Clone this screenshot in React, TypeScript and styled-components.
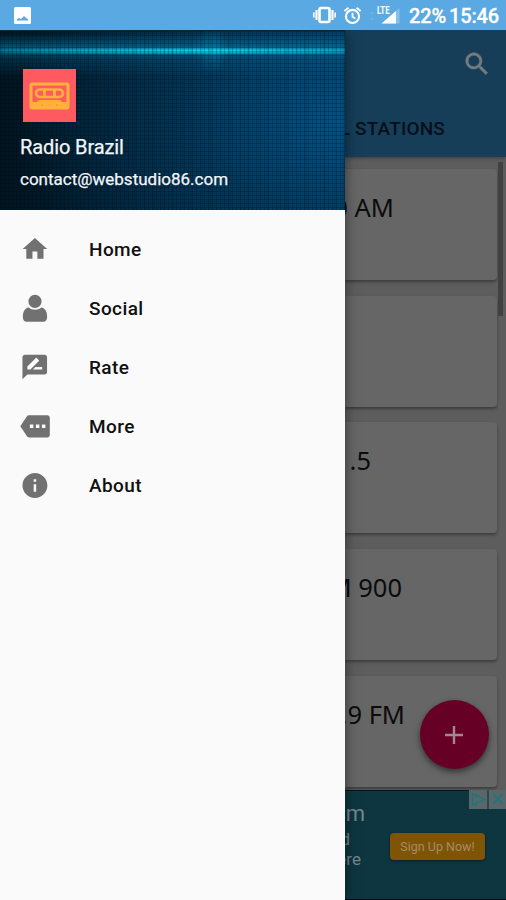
import React from "react";
import styled, { createGlobalStyle } from "styled-components";

const Global = createGlobalStyle`
  * { box-sizing: border-box; }
  body { margin: 0; background: #fafafa; font-family: Roboto, sans-serif; }
`;

const Screen = styled.div`
  width: 506px;
  height: 900px;
  overflow: hidden;
  display: flex;
  flex-direction: column;
`;

const StatusBar = styled.header`
  height: 30px;
  flex: none;
  background: #5aa9e3;
  display: flex;
  align-items: center;
  padding: 0 7px 0 14px;
  color: #fff;
`;

const StatusIcons = styled.div`
  margin-left: auto;
  display: flex;
  align-items: center;
  gap: 7px;
  margin-right: 7px;
`;

const StatusText = styled.span<{ $w: number }>`
  width: ${(p) => p.$w}px;
  font-size: 20px;
  line-height: 30px;
  font-weight: 500;
  letter-spacing: -0.15px;
  -webkit-text-stroke: 0.3px #fff;
  white-space: nowrap;
  padding-top: 2px;
`;

const Body = styled.div`
  flex: 1;
  min-height: 0;
  display: flex;
`;

const Drawer = styled.nav`
  width: 345px;
  flex: none;
  background: #fafafa;
  z-index: 1;
  box-shadow: 0 0 12px rgba(0, 0, 0, 0.5);
  clip-path: inset(0 -20px 0 0);
`;

const Banner = styled.div`
  height: 180px;
  padding: 38px 20px 0;
  border-top: 1px solid #06293a;
  color: #f3f6f8;
  background:
    repeating-linear-gradient(90deg, rgba(0, 8, 24, 0.24) 0 1px, transparent 1px 4px),
    repeating-linear-gradient(180deg, rgba(0, 8, 24, 0.24) 0 1px, transparent 1px 4px),
    repeating-linear-gradient(90deg, rgba(0, 20, 40, 0.1) 0 3px, transparent 3px 11px, rgba(0, 20, 40, 0.08) 11px 13px, transparent 13px 19px),
    radial-gradient(ellipse 260px 4px at 205px 20px, rgba(20, 230, 255, 0.95), transparent),
    radial-gradient(ellipse 16px 24px at 212px 19px, rgba(0, 190, 230, 0.25), transparent),
    linear-gradient(180deg, transparent 2px, rgba(0, 135, 180, 0.65) 19px, rgba(0, 110, 160, 0.3) 27px, transparent 46px),
    radial-gradient(ellipse 330px 220px at 345px 90px, #025386, rgba(3, 62, 100, 0.65) 50%, transparent),
    linear-gradient(90deg, #011520, #02304d);
`;

const Logo = styled.svg`
  display: block;
  width: 53px;
  height: 53px;
  margin-left: 3px;
`;

const AppName = styled.div`
  margin-top: 12px;
  font-size: 20px;
  line-height: 26px;
  letter-spacing: -0.1px;
  -webkit-text-stroke: 0.25px #f3f6f8;
`;

const Email = styled.div`
  margin-top: 8px;
  font-size: 17px;
  line-height: 22px;
  -webkit-text-stroke: 0.25px #f3f6f8;
`;

const Menu = styled.ul`
  list-style: none;
  margin: 0;
  padding: 10px 0 0;
`;

const MenuItem = styled.li`
  height: 59px;
  display: flex;
  align-items: center;
  padding-left: 17px;
  font-size: 19px;
  font-weight: 500;
  letter-spacing: 0.4px;
  color: #101010;
`;

const MenuIcon = styled.svg`
  width: 36px;
  height: 36px;
  margin-right: 36px;
  fill: #717171;
`;

const Page = styled.main`
  flex: 1;
  min-width: 0;
  display: flex;
  flex-direction: column;
  overflow: hidden;
  background: #5d5d5d;
`;

const AppBar = styled.div`
  height: 127px;
  flex: none;
  display: flex;
  flex-direction: column;
  align-items: flex-end;
  background: #163e59;
  box-shadow: 0 1px 4px rgba(0, 0, 0, 0.35);
`;

const SearchIcon = styled.svg`
  width: 30px;
  height: 30px;
  margin: 19px 14px 0 0;
  fill: #777b7e;
  stroke: #777b7e;
  stroke-width: 0.4;
`;

const Tab = styled.div`
  margin: 37px 61px 0 0;
  font-size: 19px;
  line-height: 26px;
  font-weight: 500;
  letter-spacing: 0.15px;
  color: #07101a;
  white-space: nowrap;
`;

const ListArea = styled.div`
  flex: 1;
  min-height: 0;
  position: relative;
  overflow: hidden;
  padding: 12px 9px 0 0;
`;

const Stations = styled.div`
  display: flex;
  flex-direction: column;
  gap: 15.7px;
`;

const Card = styled.div`
  height: 111px;
  flex: none;
  background: #666;
  border-radius: 0 4px 4px 0;
  box-shadow: 0 2px 3px rgba(0, 0, 0, 0.35);
  display: flex;
  justify-content: flex-end;
`;

const Station = styled.div<{ $end: number }>`
  margin-right: ${(p) => p.$end}px;
  padding-top: 20px;
  font-family: "Noto Sans", sans-serif;
  font-size: 25.5px;
  line-height: 36px;
  color: #0c0c0c;
  white-space: nowrap;
`;

const ScrollThumb = styled.div`
  position: absolute;
  top: 5px;
  right: 3px;
  width: 5px;
  height: 154px;
  background: #414141;
`;

const AddButton = styled.button`
  position: absolute;
  right: 17.5px;
  bottom: 21px;
  width: 69px;
  height: 69px;
  border: 0;
  padding: 0;
  border-radius: 50%;
  background: #660024;
  box-shadow: 0 3px 6px rgba(0, 0, 0, 0.5);
  display: grid;
  place-items: center;
`;

const Ad = styled.aside`
  position: relative;
  height: 110px;
  flex: none;
  display: flex;
  align-items: center;
  justify-content: space-between;
  padding-right: 21px;
  background: #0e3641;
  border-top: 1px solid #03181f;
  border-bottom: 1px solid #02090c;
  color: #75868b;
`;

const AdCopy = styled.div`
  align-self: flex-start;
  width: 20px;
  display: flex;
  flex-direction: column;
  align-items: flex-end;
  padding-top: 10px;
`;

const AdLine = styled.span<{ $size: number; $h: number; $end?: number }>`
  font-size: ${(p) => p.$size}px;
  line-height: ${(p) => p.$h}px;
  margin-right: ${(p) => p.$end ?? 0}px;
`;

const AdButton = styled.div`
  width: 95px;
  height: 27px;
  margin-top: 2px;
  border-radius: 4px;
  background: #805405;
  box-shadow: 0 1px 3px rgba(0, 0, 0, 0.5);
  font-size: 12.5px;
  line-height: 27px;
  text-align: center;
  color: #a28c68;
`;

const AdChoices = styled.svg`
  position: absolute;
  top: -1px;
  right: 0;
`;

const menu = [
  { label: "Home", d: "M10 20v-6h4v6h5v-8h3L12 3 2 12h3v8z", scale: "translate(2.1 1.5) scale(.82)" },
  { label: "Social", d: "M12 2.5a4.4 4.4 0 0 1 0 8.8a4.4 4.4 0 0 1 0-8.8zM7.8 11c1.1 1 2.5 1.5 4.2 1.5s3.1-.5 4.2-1.5c2.6.4 3.9 2.9 3.9 6.1 0 2.2-1 3.4-2.6 3.4h-11c-1.6 0-2.6-1.2-2.6-3.4C3.9 13.9 5.2 11.4 7.8 11z" },
  { label: "Rate", d: "M20 2H4c-1.1 0-1.99.9-1.99 2L2 22l4-4h14c1.1 0 2-.9 2-2V4c0-1.1-.9-2-2-2zM6 14v-2.47l6.88-6.88c.2-.2.51-.2.71 0l1.77 1.77c.2.2.2.51 0 .71L8.47 14H6zm12 0h-7.5l2-2H18v2z", scale: "translate(2 1.5) scale(.82)" },
  { label: "More", d: "M22 3H7c-.69 0-1.23.35-1.59.88L0 12l5.41 8.11c.36.53.97.89 1.66.89H22c1.1 0 2-.9 2-2V5c0-1.1-.9-2-2-2zM7.8 10.6h2.8v2.8H7.8zM12.7 10.6h2.8v2.8h-2.8zM17.6 10.6h2.8v2.8h-2.8z", scale: "translate(2.2 1.7) scale(.82)" },
  { label: "About", d: "M12 2C6.48 2 2 6.48 2 12s4.48 10 10 10 10-4.48 10-10S17.52 2 12 2zm1 15h-2v-6h2v6zm0-8h-2V7h2v2z", scale: "translate(2 1.7) scale(.83)" },
];

const stations = [
  { name: "0 AM", end: 103 },
  { name: "", end: 0 },
  { name: ".5", end: 126 },
  { name: "M 900", end: 95 },
  { name: ".9 FM", end: 92 },
];

export default function App() {
  return (
    <>
      <Global />
      <Screen>
        <StatusBar>
          <svg width="17" height="17" viewBox="0 0 17 17">
            <rect width="17" height="17" rx="1.5" fill="#fff" />
            <path d="M3 13.5v-1.5l2-1 2 1 3-3 2 2 2 1v1.5z" fill="#5aa9e3" />
          </svg>
          <StatusIcons>
            <svg width="23" height="18" viewBox="0 0 23 18" fill="none" stroke="#fff">
              <rect x="6.5" y="2" width="10" height="14" rx="1.5" strokeWidth="2.6" />
              <path d="M3.5 4v10M19.5 4v10" strokeWidth="2.2" />
              <path d="M.8 6.5v5M22.2 6.5v5" strokeWidth="1.6" />
            </svg>
            <svg width="19" height="19" viewBox="0 0 20 20" fill="none" stroke="#fff" strokeWidth="2.3">
              <circle cx="10" cy="11" r="6.9" />
              <path d="M1.5 5.3 5.8 1.8M18.500 5.3 14.2 1.8M10 7v4.3l3 1.8" strokeWidth="1.9" />
            </svg>
            <svg width="33" height="22" viewBox="5 0 33 22">
              <circle cx="8" cy="9" r="1" fill="#79baeb" />
              <circle cx="8" cy="15" r="1" fill="#79baeb" />
              <path d="M18 19.500 35.500 4v15.500z" fill="#83c0ed" />
              <path d="M17.500 19.500 32 7v12.500z" fill="#fff" />
              <rect x="12" y="1" width="13.500" height="9.500" fill="#5aa9e3" />
              <text x="13" y="10" fontFamily="Roboto" fontWeight="700" fontSize="11" textLength="12.500" lengthAdjust="spacingAndGlyphs" fill="#fff">LTE</text>
            </svg>
          </StatusIcons>
          <StatusText $w={40}>22%</StatusText>
          <StatusText $w={50}>15:46</StatusText>
        </StatusBar>
        <Body>
          <Drawer>
            <Banner>
              <Logo viewBox="0 0 53 53">
                <rect width="53" height="53" fill="#ff5a5f" />
                <rect x="8" y="15" width="37" height="24" rx="1" fill="none" stroke="#ffb13b" strokeWidth="3" />
                <path d="M8 33h6l2-2h21l2 2h6v7H8z" fill="#ffb13b" />
                <rect x="13" y="20.5" width="27" height="7.5" rx="3.7" fill="none" stroke="#ffb13b" strokeWidth="2.6" />
                <path d="M21.5 20v9M31.5 20v9" stroke="#ffb13b" strokeWidth="3" />
                <path d="M18 36h2M26 36h1M33 36h2" stroke="#ee8c3d" />
              </Logo>
              <AppName>Radio Brazil</AppName>
              <Email>contact@webstudio86.com</Email>
            </Banner>
            <Menu>
              {menu.map((m) => (
                <MenuItem key={m.label}>
                  <MenuIcon viewBox="0 0 24 24">
                    <path d={m.d} transform={m.scale} fillRule="evenodd" />
                  </MenuIcon>
                  {m.label}
                </MenuItem>
              ))}
            </Menu>
          </Drawer>
          <Page>
            <AppBar>
              <SearchIcon viewBox="0 0 24 24">
                <path d="M15.5 14h-.79l-.28-.27C15.41 12.59 16 11.11 16 9.5 16 5.91 13.09 3 9.5 3S3 5.91 3 9.5 5.91 16 9.5 16c1.61 0 3.09-.59 4.23-1.57l.27.28v.79l5 4.99L20.49 19l-4.99-5zm-6 0C7.01 14 5 11.99 5 9.5S7.01 5 9.5 5 14 7.01 14 9.5 11.99 14 9.5 14z" />
              </SearchIcon>
              <Tab>ALL STATIONS</Tab>
            </AppBar>
            <ListArea>
              <Stations>
                {stations.map((s, i) => (
                  <Card key={i}>
                    <Station $end={s.end}>{s.name}</Station>
                  </Card>
                ))}
              </Stations>
              <ScrollThumb />
              <AddButton aria-label="Add">
                <svg width="18" height="18" viewBox="0 0 18 18" stroke="#a08790" strokeWidth="2.4">
                  <path d="M9 0v18M0 9h18" />
                </svg>
              </AddButton>
            </ListArea>
            <Ad>
              <AdCopy>
                <AdLine $size={22} $h={26}>m</AdLine>
                <AdLine $size={17} $h={24} $end={15}>d</AdLine>
                <AdLine $size={17} $h={17} $end={4}>ere</AdLine>
              </AdCopy>
              <AdButton>Sign Up Now!</AdButton>
              <AdChoices width="37" height="19" viewBox="0 0 37 19" fill="none" stroke="#167784" strokeWidth="1.5">
                <rect width="37" height="19" fill="#5b6669" stroke="none" />
                <path d="M3.5 3.5v12l12-6zM7.5 3.5v4.500M7.500 11v4.500" strokeWidth="1.3" />
                <path d="M19 0v19" stroke="#17424b" />
                <path d="M24 4l10 10M34 4 24 14" />
              </AdChoices>
            </Ad>
          </Page>
        </Body>
      </Screen>
    </>
  );
}
